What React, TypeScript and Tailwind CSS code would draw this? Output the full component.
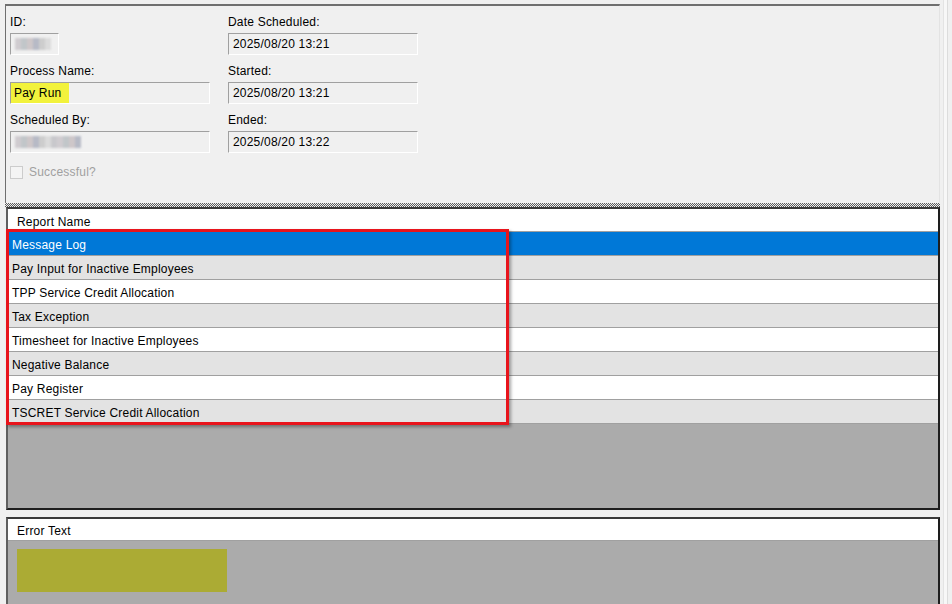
import React from "react";

const font = { fontFamily: '"Liberation Sans", Arial, sans-serif', letterSpacing: "0.2px" };

function Box({ children, className = "", pad = true }: { children?: React.ReactNode; className?: string; pad?: boolean }) {
  return (
    <div
      className={`h-[22px] border-t border-l border-[#a0a0a0] border-b border-r border-b-white border-r-white bg-[#f0f0f0] flex items-center text-[12px] text-black ${
        pad ? "pl-[4px]" : ""
      } ${className}`}
    >
      {children}
    </div>
  );
}

function Field({ label, children }: { label: string; children: React.ReactNode }) {
  return (
    <div className="flex flex-col">
      <div className="h-[19px] leading-[16px] text-[12px] text-black">{label}</div>
      {children}
    </div>
  );
}

function Blur({ w }: { w: number }) {
  const cols = ["#c9c4c9", "#b6bcc0", "#c6bdc0", "#a9adbc", "#c5c5c5", "#d6d6d6", "#bfbfc4"];
  return (
    <div className="flex blur-[1px] opacity-80" style={{ width: w }}>
      {Array.from({ length: Math.floor(w / 6) }).map((_, i) => (
        <div key={i} className="w-[6px] h-[12px]" style={{ background: cols[i % cols.length] }} />
      ))}
    </div>
  );
}

const reports = [
  "Message Log",
  "Pay Input for Inactive Employees",
  "TPP Service Credit Allocation",
  "Tax Exception",
  "Timesheet for Inactive Employees",
  "Negative Balance",
  "Pay Register",
  "TSCRET Service Credit Allocation",
];

export default function App() {
  return (
    <div className="w-[952px] h-[604px] bg-[#f0f0f0] flex overflow-hidden" style={font}>
      <div className="w-[940px] pl-[5px] pt-[4px] flex flex-col">
        {/* top details panel */}
        <div className="h-[199px] border-t-2 border-l border-[#6f6f6f] border-r border-r-[#e3e3e3] flex gap-[18px] pl-[4px] pt-[8px]">
          <div className="w-[200px] flex flex-col gap-[8px]">
            <Field label="ID:">
              <Box className="w-[49px] border-r-[#f0f0f0]">
                <Blur w={36} />
              </Box>
            </Field>
            <Field label="Process Name:">
              <Box pad={false}>
                <span className="bg-[#f2f23c] h-[20px] w-[58px] flex items-center pl-[3px]">Pay Run</span>
              </Box>
            </Field>
            <Field label="Scheduled By:">
              <Box>
                <Blur w={66} />
              </Box>
            </Field>
            <div className="flex items-center gap-[6px] mt-[2px]">
              <div className="w-[13px] h-[13px] border border-[#cccccc] bg-[#f4f4f4]" />
              <span className="text-[12px] text-[#a0a0a0]">Successful?</span>
            </div>
          </div>
          <div className="w-[190px] flex flex-col gap-[8px]">
            <Field label="Date Scheduled:">
              <Box>2025/08/20 13:21</Box>
            </Field>
            <Field label="Started:">
              <Box>2025/08/20 13:21</Box>
            </Field>
            <Field label="Ended:">
              <Box>2025/08/20 13:22</Box>
            </Field>
          </div>
        </div>

        {/* splitter */}
        <div className="h-[4px] bg-[conic-gradient(#5a5a5a_25%,#f0f0f0_0_50%,#5a5a5a_0_75%,#f0f0f0_0)] bg-[length:2px_2px]" />

        {/* report list */}
        <div className="relative h-[303px] ml-[1px] border-2 border-[#1e1e1e] border-l-[#5f5f5f] border-t-[#3a3a3a] bg-[#ababab] flex flex-col">
          <div className="h-[23px] bg-white flex items-center pl-[9px] pt-[3px] text-[12px] text-black border-b border-[#a0a0a0]">
            Report Name
          </div>
          {reports.map((r, i) => (
            <div
              key={r}
              className={`h-[24px] flex items-center pl-[4px] pt-[2px] text-[12px] border-b border-[#a0a0a0] ${
                i === 0 ? "bg-[#0078d7] text-white" : i % 2 === 1 ? "bg-[#e3e3e3] text-black" : "bg-white text-black"
              }`}
            >
              {r}
            </div>
          ))}
          <div className="absolute left-[-2px] top-[20px] w-[503px] h-[196px] border-[3px] border-[#e8141c] shadow-[2px_2px_3px_rgba(0,0,0,0.35)]" />
        </div>

        {/* error text */}
        <div className="mt-[7px] flex-1 ml-[1px] border-2 border-b-0 border-[#1e1e1e] border-l-[#5f5f5f] border-t-[#3a3a3a] bg-[#ababab] flex flex-col">
          <div className="h-[22px] bg-white flex items-center pl-[9px] pt-[3px] text-[12px] text-black border-b border-[#a0a0a0]">
            Error Text
          </div>
          <div className="pl-[9px] pt-[8px]">
            <div className="w-[210px] h-[43px] bg-[#abab34]" />
          </div>
        </div>
      </div>

      {/* right edge strip */}
      <div className="flex-1 flex">
        <div className="w-[3px] bg-[#f0f0f0]" />
        <div className="w-[1px] bg-[#e3e3e3]" />
        <div className="w-[3px] bg-[#f7f7f7]" />
        <div className="w-[1px] bg-[#dcdcdc]" />
        <div className="flex-1 bg-[#f0f0f0]" />
      </div>
    </div>
  );
}
